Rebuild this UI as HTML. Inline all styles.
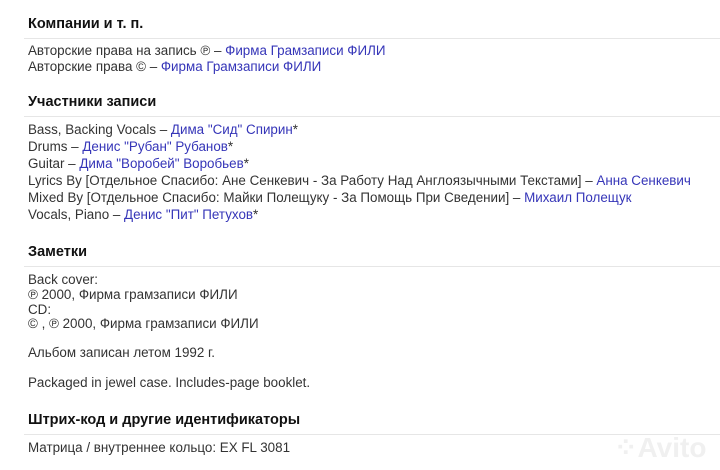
<!DOCTYPE html>
<html><head><meta charset="utf-8"><style>
body{margin:0;width:720px;height:470px;background:#fff;position:relative;overflow:hidden;font-family:"Liberation Sans",Arial,sans-serif;color:#333;}
.h{position:absolute;left:28px;font-size:14.5px;font-weight:bold;color:#111;line-height:18px;}
.l{position:absolute;left:24px;right:0;height:1px;background:#e6e6e6;}
.t{position:absolute;left:28px;font-size:13.4px;line-height:16px;white-space:nowrap;}
a{color:#3535b8;text-decoration:none;}
.logo{position:absolute;left:614px;top:431px;color:#f0f0f0;font-size:28px;font-weight:bold;}
</style></head><body>
<div class="h" style="top:15px">Компании и т. п.</div>
<div class="l" style="top:38px"></div>
<div class="t" style="top:43px">Авторские права на запись ℗ – <a>Фирма Грамзаписи ФИЛИ</a></div>
<div class="t" style="top:59px">Авторские права © – <a>Фирма Грамзаписи ФИЛИ</a></div>

<div class="h" style="top:93px">Участники записи</div>
<div class="l" style="top:116px"></div>
<div class="t" style="top:122px">Bass, Backing Vocals – <a>Дима "Сид" Спирин</a>*</div>
<div class="t" style="top:139px">Drums – <a>Денис "Рубан" Рубанов</a>*</div>
<div class="t" style="top:156px">Guitar – <a>Дима "Воробей" Воробьев</a>*</div>
<div class="t" style="top:173px">Lyrics By [Отдельное Спасибо: Ане Сенкевич - За Работу Над Англоязычными Текстами] – <a>Анна Сенкевич</a></div>
<div class="t" style="top:190px">Mixed By [Отдельное Спасибо: Майки Полещуку - За Помощь При Сведении] – <a>Михаил Полещук</a></div>
<div class="t" style="top:207px">Vocals, Piano – <a>Денис "Пит" Петухов</a>*</div>

<div class="h" style="top:243px">Заметки</div>
<div class="l" style="top:266px"></div>
<div class="t" style="top:272px">Back cover:</div>
<div class="t" style="top:287px">℗ 2000, Фирма грамзаписи ФИЛИ</div>
<div class="t" style="top:302px">CD:</div>
<div class="t" style="top:316px">© , ℗ 2000, Фирма грамзаписи ФИЛИ</div>
<div class="t" style="top:345px">Альбом записан летом 1992 г.</div>
<div class="t" style="top:375px">Packaged in jewel case. Includes-page booklet.</div>

<div class="h" style="top:411px">Штрих-код и другие идентификаторы</div>
<div class="l" style="top:434px"></div>
<div class="t" style="top:440px">Матрица / внутреннее кольцо: EX FL 3081</div>
<div class="logo">⁘Avito</div>
</body></html>
